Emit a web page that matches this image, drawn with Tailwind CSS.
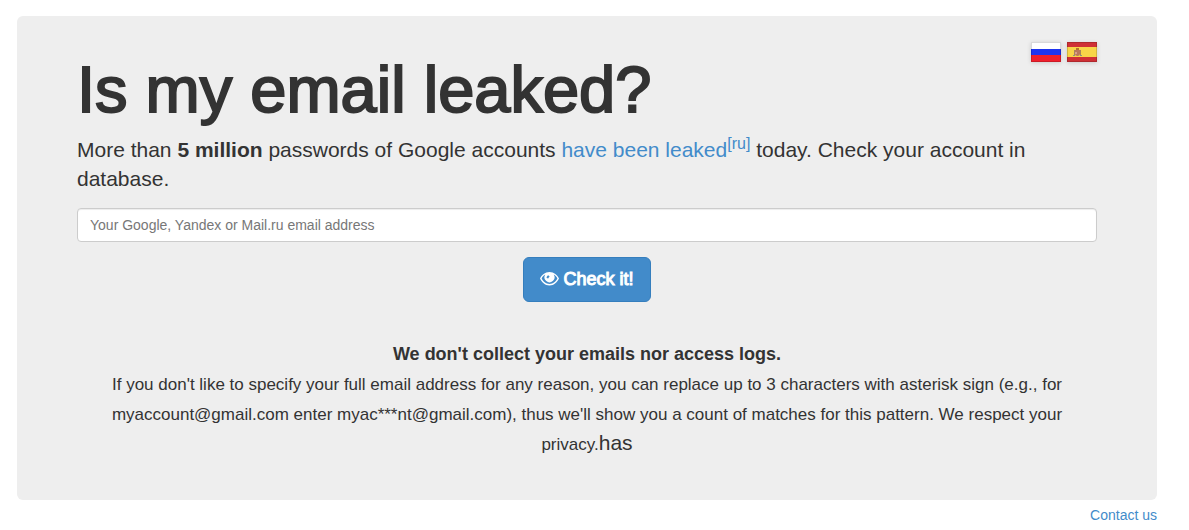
<!DOCTYPE html>
<html lang="en">

<head>
  <meta charset="UTF-8">
  <meta name="viewport" content="width=device-width, initial-scale=1.0">
  <title>Is my email leaked?</title>
  <script src="https://cdn.jsdelivr.net/npm/@tailwindcss/browser@4"></script>
</head>

<body class="bg-white text-[#333] font-['Liberation_Sans',Arial,sans-serif]">

  <div class="max-w-[1189px] pt-4 pl-[17px] pr-8 mx-auto">
    <!-- Jumbotron -->
    <main class="rounded-md bg-[#eee] px-[60px] pt-[26px] pb-[42px]">
      <!-- Languages -->
      <nav class="flex justify-end gap-[6px]">
        <a href="/ru" aria-label="Russian" class="block">
          <svg class="block drop-shadow-sm" width="30" height="20" viewBox="0 0 30 20">
            <rect width="30" height="7" fill="#fff" />
            <rect y="7" width="30" height="6" fill="#1f35f0" />
            <rect y="13" width="30" height="7" fill="#f01f2c" />
            <rect x=".5" y=".5" width="29" height="19" fill="none" stroke="#000" stroke-opacity=".15" />
          </svg>
        </a>
        <a href="/es" aria-label="Spanish" class="block">
          <svg class="block drop-shadow-sm" width="30" height="20" viewBox="0 0 30 20">
            <rect width="30" height="20" fill="#cf3035" />
            <rect y="5" width="30" height="10" fill="#f8d548" />
            <path d="M7 8h1v5H7zM13 8h1v5h-1z" fill="#a9865a" />
            <path d="M8 8h5v4q0 2-2.500 2T8 12z" fill="#b9785c" />
            <path d="M9 6h3v2H9z" fill="#b5722e" />
            <path d="M8 10h2v2H8z" fill="#d9a08a" />
            <path d="M6 13h2v1H6zM13 13h2v1h-2z" fill="#8f8f85" />
            <rect x=".5" y=".5" width="29" height="19" fill="none" stroke="#000" stroke-opacity=".15" />
          </svg>
        </a>
      </nav>

      <h1 class="text-[65px] leading-[56px] [-webkit-text-stroke:2px_#333]">Is my email leaked?</h1>
      <p class="mt-[17px] text-[21px] leading-[29px]">
        More than <b>5 million</b> passwords of Google accounts
        <a href="#" class="text-[#428bca]">have been leaked<sup class="text-[16px] leading-none">[ru]</sup></a>
        today. Check your account in database.
      </p>

      <!-- Check form -->
      <form class="mt-[15px] flex flex-col items-center">
        <input type="text" aria-label="Email address" placeholder="Your Google, Yandex or Mail.ru email address"
          class="w-full h-[34px] px-3 rounded bg-white border border-[#ccc] text-[14px] placeholder:text-[#777] shadow-[inset_0_1px_1px_rgba(0,0,0,0.075)]">
        <button type="submit"
          class="mt-[15px] h-[45px] px-4 flex items-center gap-1 rounded-md border border-[#357ebd] bg-[#428bca] text-white text-[18px] [-webkit-text-stroke:1px_#fff]">
          <svg width="19" height="18" viewBox="0 0 19 18">
            <path fill="#fff" fill-rule="evenodd" d="M9.500 1C14 1 17.400 4 19 7.500 17.400 11 14 14.500 9.500 14.500S1.600 11 0 7.500C1.600 4 5 1 9.500 1zM5.300 3.600C3.600 4.500 2.300 6 1.600 7.500c1.400 2.800 4.300 5.400 7.900 5.400s6.500-2.600 7.900-5.400c-.7-1.500-2-3-3.700-3.900a5 5 0 1 1-8.400 0zM8.300 4.300C7 4.800 6.500 6 6.700 7.100l1.500.5c.2-.9.700-1.500 1.500-1.800z" />
          </svg>
          Check it!
        </button>
      </form>

      <!-- Privacy note -->
      <p class="mt-9 text-center text-[21px] leading-[30px]">
        <small class="text-[17px] leading-none"><b class="text-[18px]">We don't collect your emails nor access logs.</b><br>
          If you don't like to specify your full email address for any reason, you can replace up to 3 characters with
          asterisk sign (e.g., for myaccount@gmail.com enter myac***nt@gmail.com), thus we'll show you a count of
          matches for this pattern. We respect your privacy.</small>has
      </p>
    </main>

    <footer class="mt-[5px] text-right text-[14px] leading-5">
      <a href="#" class="text-[#428bca]">Contact us</a>
    </footer>
  </div>

</body>

</html>
